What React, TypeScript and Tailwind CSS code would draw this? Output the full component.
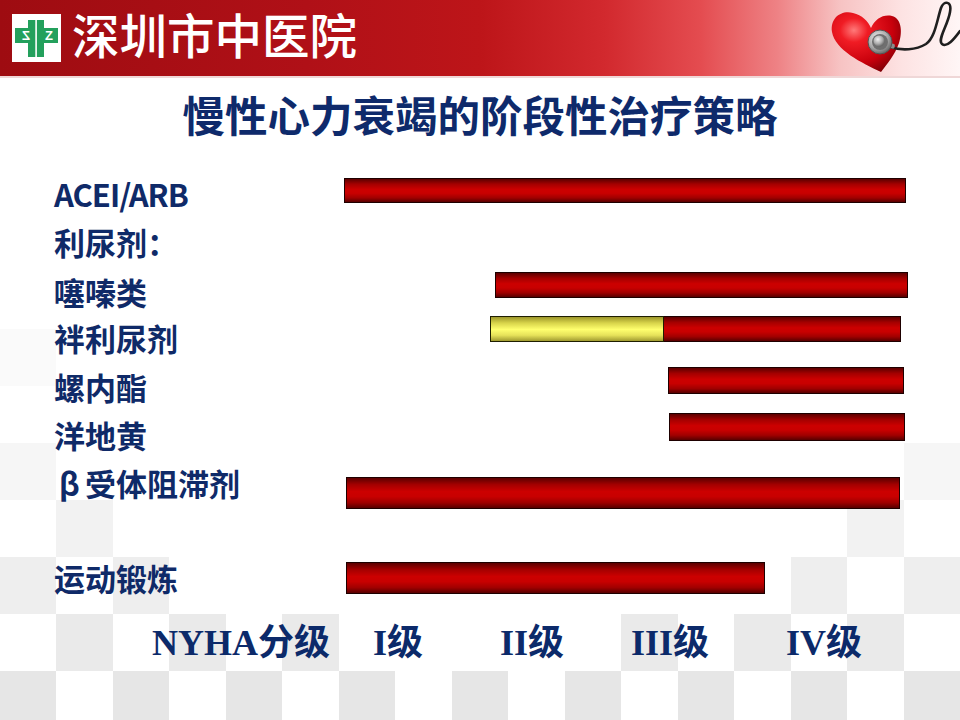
import React from "react";

// --- Background checker (decorative, sits under the slide content) ---
const TONES = [
  "bg-transparent",
  "bg-[#e6e6e6]",
  "bg-[#eaeaea]",
  "bg-[#eeeeee]",
  "bg-[#f2f2f2]",
  "bg-[#f6f6f6]",
  "bg-[#fafafa]",
];
// how far from the side a grey square still shows, per row counted from the bottom
const MAX_D = [8, 5, 2, 1, 0, -1, 0, -1, -1, -1, -1, -1];
const ROW_TONE = [1, 2, 3, 4, 5, 0, 6, 0, 0, 0, 0, 0];

function Checker() {
  const cells: { key: string; tone: string }[] = [];
  for (let i = 0; i < 12; i++) {
    const r = 11 - i;
    for (let c = 0; c < 17; c++) {
      const d = Math.min(c, 16 - c);
      let grey = (r + c) % 2 === 0 && d <= MAX_D[r];
      // the faint top squares only show on the left side
      if (r >= 6 && c > 0) grey = false;
      cells.push({ key: `${i}-${c}`, tone: grey ? TONES[ROW_TONE[r]] : TONES[0] });
    }
  }
  return (
    <div className="absolute inset-x-0 top-[78px] bottom-0 grid grid-cols-[repeat(17,minmax(0,1fr))] grid-rows-[23px_repeat(11,57px)]">
      {cells.map((cell) => (
        <div key={cell.key} className={cell.tone} />
      ))}
    </div>
  );
}

// --- Hospital logo ---
function Logo() {
  return (
    <div className="mt-[14px] ml-[12px] h-[48px] w-[49px] shrink-0 bg-white">
      <svg width="49" height="48" viewBox="0 0 49 48">
        <rect x="16" y="6" width="16" height="37" fill="#23a05c" />
        <rect x="3" y="14" width="43" height="15" fill="#23a05c" />
        <rect x="23.3" y="6" width="1.6" height="37" fill="#ffffff" />
        <text
          x="-14"
          y="26"
          transform="scale(-1,1)"
          fontSize="13"
          fontWeight="700"
          fill="#ffffff"
          fontFamily="'Liberation Sans', sans-serif"
          textAnchor="middle"
        >
          Z
        </text>
        <text
          x="37"
          y="26"
          fontSize="13"
          fontWeight="700"
          fill="#ffffff"
          fontFamily="'Liberation Sans', sans-serif"
          textAnchor="middle"
        >
          Z
        </text>
      </svg>
    </div>
  );
}

// --- Heart + stethoscope picture in the banner ---
function HeartArt() {
  return (
    <svg width="140" height="76" viewBox="0 0 140 76" className="ml-auto shrink-0">
      <defs>
        <radialGradient id="heartFill" cx="0.32" cy="0.3" r="0.8">
          <stop offset="0" stopColor="#ff7a7a" />
          <stop offset="0.25" stopColor="#f01c24" />
          <stop offset="0.7" stopColor="#c8000c" />
          <stop offset="1" stopColor="#7c0006" />
        </radialGradient>
        <radialGradient id="chest" cx="0.4" cy="0.35" r="0.7">
          <stop offset="0" stopColor="#f2f2f2" />
          <stop offset="0.6" stopColor="#a9a9a9" />
          <stop offset="1" stopColor="#5d5d5d" />
        </radialGradient>
      </defs>
      <path
        d="M61,72 C42,63 15,50 12,32 C10,18 21,10 33,13 C42,15 48,21 51,28 C55,19 63,14 72,16 C81,18 83,31 79,43 C75,55 67,64 61,72 Z"
        fill="url(#heartFill)"
      />
      <path
        d="M70,47 C82,51 96,50 106,44 C115,38 117,20 121,8 C124,0 132,1 130,12 C128,25 117,40 122,44 C127,48 134,39 140,31"
        fill="none"
        stroke="#1f1f1f"
        strokeWidth="2.6"
        strokeLinecap="round"
      />
      <rect x="66" y="43" width="9" height="5" rx="2" fill="#8a8a8a" transform="rotate(12 70 45)" />
      <circle cx="60" cy="42" r="12" fill="url(#chest)" stroke="#555" strokeWidth="1" />
      <circle cx="60" cy="42" r="8" fill="#6f6f6f" />
      <circle cx="59" cy="41" r="5.5" fill="url(#chest)" />
    </svg>
  );
}

// --- Treatment bars ---
const RED =
  "border border-[#1e0000] bg-[linear-gradient(to_bottom,#5c0000_0%,#a40000_22%,#cc0000_45%,#c80000_62%,#a00000_82%,#580000_100%)]";
const YELLOW =
  "border border-[#1e1e00] bg-[linear-gradient(to_bottom,#9c962a_0%,#d8d44a_25%,#ffff6e_52%,#e6e25a_76%,#a09a30_100%)]";

function Label({ children, className = "" }: { children: React.ReactNode; className?: string }) {
  return (
    <div className={`w-[344px] shrink-0 pl-[54px] text-[31px] leading-none font-bold text-[#0f2a68] ${className}`}>
      {children}
    </div>
  );
}

export default function App() {
  return (
    <div className="relative h-[720px] w-[960px] overflow-hidden bg-white font-['Noto_Sans_CJK_SC','Noto_Sans',sans-serif]">
      <Checker />

      <div className="relative z-10 flex flex-col">
        {/* Banner */}
        <header className="flex h-[76px] items-start bg-[linear-gradient(to_right,#9e0c11_0%,#b01017_32%,#bd1519_50%,#d2292e_63%,#e44c50_73%,#ee8285_81%,#f7c3c3_87.5%,#fde3e3_94%,#fff6f6_100%)]">
          <Logo />
          <div className="mt-[10px] ml-[11px] text-[47.5px] leading-none font-medium text-white">
            深圳市中医院
          </div>
          <HeartArt />
        </header>
        <div className="h-[2px] bg-[#efd7d7]" />

        {/* Title */}
        <h1 className="mt-[15px] text-center text-[42.5px] leading-none font-bold text-[#0e2a6b]">
          慢性心力衰竭的阶段性治疗策略
        </h1>

        {/* Drug rows */}
        <div className="mt-[42px] flex flex-col">
          <div className="flex h-[48px] items-start">
            <Label className="text-[30px] tracking-[-1px]">ACEI/ARB</Label>
            <div className={`h-[25px] w-[562px] ${RED}`} />
          </div>

          <div className="flex h-[46px] items-start">
            <Label>利尿剂：</Label>
          </div>

          <div className="flex h-[44px] items-start">
            <Label className="mt-[4px]">噻嗪类</Label>
            <div className={`ml-[151px] h-[26px] w-[413px] ${RED}`} />
          </div>

          <div className="flex h-[51px] items-start">
            <Label className="mt-[6px]">袢利尿剂</Label>
            <div className={`ml-[146px] h-[26px] w-[174px] ${YELLOW}`} />
            <div className={`h-[26px] w-[237px] border-l-0 ${RED}`} />
          </div>

          <div className="flex h-[46px] items-start">
            <Label className="mt-[4px]">螺内酯</Label>
            <div className={`ml-[324px] h-[27px] w-[236px] ${RED}`} />
          </div>

          <div className="flex h-[54px] items-start">
            <Label className="mt-[6px]">洋地黄</Label>
            <div className={`ml-[325px] h-[28px] w-[236px] ${RED}`} />
          </div>

          <div className="flex h-[95px] items-start">
            <Label>
              <span className="inline-block w-[31px] text-center">β</span>受体阻滞剂
            </Label>
            <div className={`mt-[10px] ml-[2px] h-[32px] w-[554px] ${RED}`} />
          </div>

          <div className="flex h-[63px] items-start">
            <Label>运动锻炼</Label>
            <div className={`ml-[2px] h-[32px] w-[419px] ${RED}`} />
          </div>
        </div>

        {/* NYHA classes */}
        <div className="flex h-[36px] items-start pl-[152px] font-['Liberation_Serif','Noto_Sans_CJK_SC',serif] text-[36px] leading-none font-bold text-[#0c2a6a]">
          <div className="w-[221px] shrink-0">NYHA分级</div>
          <div className="w-[127px] shrink-0">I级</div>
          <div className="w-[131px] shrink-0">II级</div>
          <div className="w-[155px] shrink-0">III级</div>
          <div className="shrink-0">IV级</div>
        </div>
      </div>
    </div>
  );
}
